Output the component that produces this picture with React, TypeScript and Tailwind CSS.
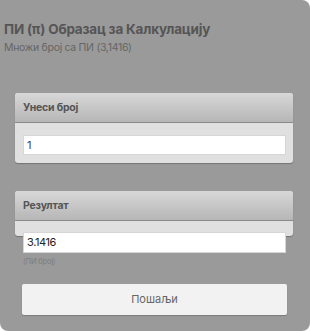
import React from "react";

const font = { fontFamily: "Inter, 'Noto Sans', sans-serif" };

function CardHeader({ title }: { title: string }) {
  return (
    <div className="h-[30px] flex items-center px-[8px] rounded-t-[3px] bg-gradient-to-b from-[#d8d8d8] to-[#b6b6b6] border-b border-[#8a8a8a]">
      <span className="text-[10.5px] font-bold text-[#555] tracking-[-0.2px]">{title}</span>
    </div>
  );
}

export default function App() {
  return (
    <div
      className="w-[310px] h-[331px] bg-[#9a9a9a] rounded-tr-[8px] rounded-b-[8px] flex flex-col"
      style={font}
    >
      <div className="pl-[4px] pt-[21px]">
        <h1 className="text-[13.5px] leading-[16px] font-bold text-[#555] tracking-[-0.2px]">
          ПИ (π) Образац за Калкулацију
        </h1>
        <p className="mt-[4px] text-[10.5px] leading-[14px] text-[#666] tracking-[-0.3px]">
          Множи број са ПИ (3,1416)
        </p>
      </div>

      <div className="mx-[15px] w-[278px] mt-[38px] rounded-[3px] bg-[#e0e0e0] shadow-[0_1px_1px_rgba(0,0,0,0.25)]">
        <CardHeader title="Унеси број" />
        <div className="px-[8px] pt-[8px] pb-[8px]">
          <input
            defaultValue="1"
            className="w-[263px] h-[20px] bg-white border border-[#d6d6d6] px-[3px] text-[11px] text-[#445] outline-none"
            style={font}
          />
        </div>
      </div>

      <div className="mx-[15px] w-[278px] mt-[28px] rounded-[3px] bg-[#e0e0e0] shadow-[0_1px_1px_rgba(0,0,0,0.25)]">
        <CardHeader title="Резултат" />
        <div className="h-[15px]" />
      </div>
      <div className="pl-[23px] -mt-[8px] relative">
        <input
          defaultValue="3.1416"
          readOnly
          className="w-[263px] h-[21px] bg-white border border-[#d6d6d6] px-[3px] text-[11px] text-[#222] tracking-[-0.4px] outline-none"
          style={font}
        />
        <div className="mt-[4px] text-[7.5px] leading-[9px] text-[#7c7c7c] tracking-[-0.2px]">(ПИ број)</div>
      </div>

      <button
        className="ml-[22px] mt-[18px] w-[265px] h-[31px] bg-[#f2f2f2] rounded-[2px] text-[11px] text-[#666] shadow-[0_1px_1px_rgba(0,0,0,0.2)]"
        style={font}
      >
        Пошаљи
      </button>
    </div>
  );
}
